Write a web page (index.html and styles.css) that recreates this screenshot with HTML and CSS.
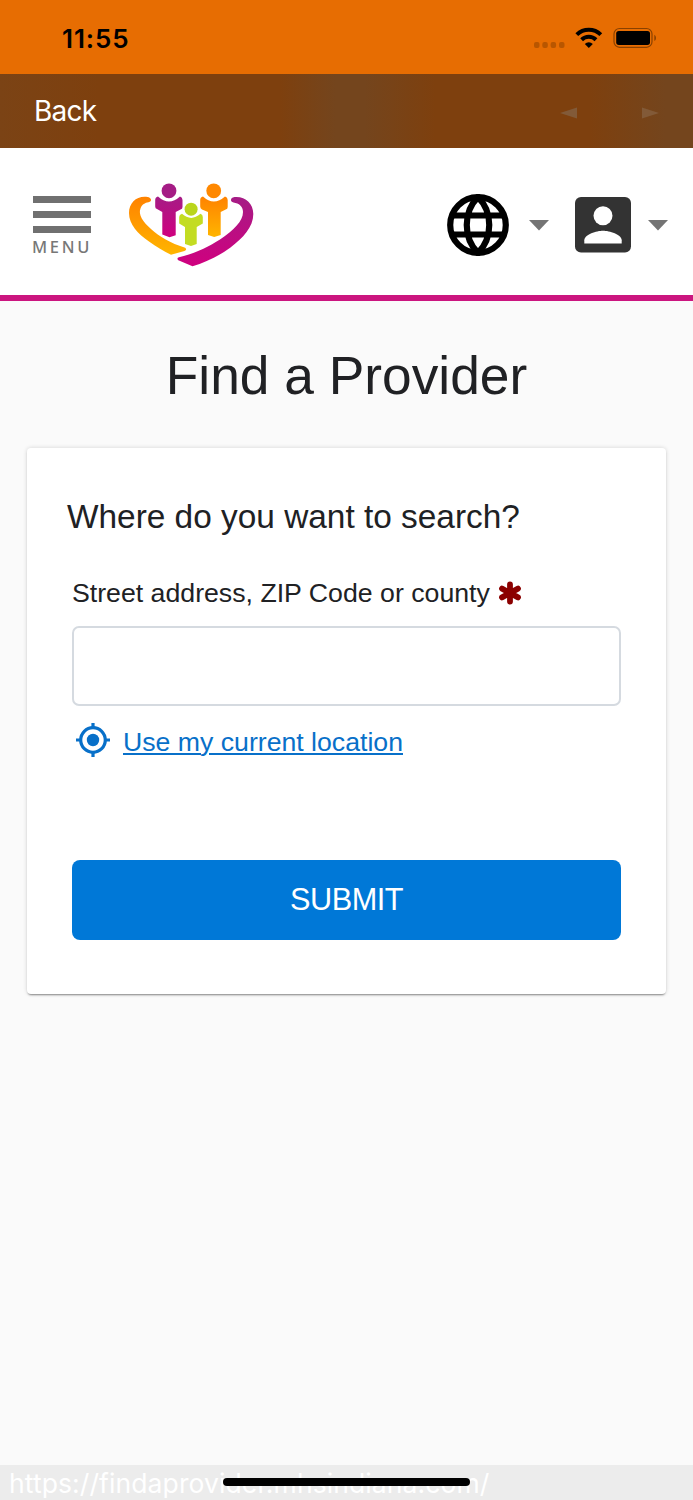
FILE: index.html
```html
<!DOCTYPE html>
<html lang="en">
<head>
<meta charset="utf-8">
<title>Find a Provider</title>
<link rel="stylesheet" href="styles.css">
</head>
<body>
<div class="screen">
  <div class="status">
    <span class="time">11:55</span>
    <svg class="status-icons" width="126" height="28" viewBox="0 0 126 28">
      <g fill="#b85600"><rect x="4" y="18" width="5.5" height="6" rx="2"/><rect x="12.3" y="18" width="5.5" height="6" rx="2"/><rect x="20.6" y="18" width="5.5" height="6" rx="2"/><rect x="29" y="18" width="5.5" height="6" rx="2"/></g>
      <g fill="none" stroke="#000" stroke-width="4"><path d="M46.800 10.600a17.300 17.300 0 0 1 24 0"/><path d="M51.600 15.700a10.300 10.300 0 0 1 14.400 0"/></g>
      <path d="M58.800 24l-4-4a5.700 5.700 0 0 1 8 0z"/>
      <rect x="84" y="4.500" width="38" height="18.800" rx="5.500" fill="none" stroke="#8a4100" stroke-width="1.200"/>
      <rect x="86.200" y="7" width="33.800" height="13.900" rx="2.600"/>
      <path d="M124.300 10.700q1.700 1 1.700 3.200t-1.700 3.200z" fill="#8a4100"/>
    </svg>
  </div>
  <nav class="browser-nav">
    <span class="back">Back</span>
    <svg class="arrows" width="99" height="14" viewBox="0 0 99 14" fill="#825a38"><path d="M0 7L17 1.500v11zM99 7L82 1.500v11z"/></svg>
  </nav>
  <header class="site-header">
    <div class="menu">
      <i class="bar"></i><i class="bar"></i><i class="bar"></i>
      <span class="menu-label">MENU</span>
    </div>
    <svg class="logo" width="126" height="86" viewBox="0 0 126 86">
      <defs>
        <linearGradient id="orange" x1="0" y1="0" x2="0" y2="1"><stop offset="0" stop-color="#ff8200"/><stop offset="1" stop-color="#ffb500"/></linearGradient>
        <linearGradient id="purple" x1="0" y1="0" x2="0" y2="1"><stop offset="0" stop-color="#a51c85"/><stop offset="1" stop-color="#d0007f"/></linearGradient>
      </defs>
      <path fill="url(#orange)" d="M18.500 14C8 12.500 0 19.500 0 30C0 41.500 9 51 20 58.500C27 63.500 35 68.500 42 71.700L55.500 68C57.800 67 57.500 65.300 55.500 64.500C42 60.500 30 53.500 22 46C14 39 9 31.500 11.500 25.500C13 21.500 16 19.800 19.500 19.300C23.500 18.500 22.500 14.500 18.500 14Z"/>
      <path fill="url(#purple)" d="M105.500 14C116 13 124.300 20 124.300 31C124.300 44 114 55 101.500 64.500C90 73 76.500 79.500 63.500 83.300L49.300 77.300C47.800 76 48.500 74.500 50 74.200C66 70.500 80 63.500 91 56.500C105 47 114 38 114 29C114 23.500 110 20.200 104.500 19.500C100.500 18.500 101.500 14.500 105.500 14Z"/>
      <circle cx="40" cy="7.800" r="7.400" fill="#a51c85"/><circle cx="84.700" cy="7.800" r="7.400" fill="#ff8800"/>
      <path fill="url(#purple)" d="M29 13.500Q40 23.500 51 13.500Q53.500 14.200 53.500 17V24Q53.500 26 51.500 26.500L46.700 29V52.300L40.500 54.300L33.300 51.500V29L28 26Q26.200 25.500 26.200 23.500V17Q26.200 14.200 29 13.500Z"/>
      <path fill="url(#orange)" d="M74 13.500Q84.700 23.500 96 13.500Q98.700 14.200 98.700 17V24Q98.700 26 96.700 26.500L91.700 29V52L85.200 54L79 52V29L73 26.500Q71.200 25.500 71.200 23.500V17Q71.200 14.200 74 13.500Z"/>
      <circle cx="62.100" cy="26.200" r="6.500" fill="#bad51c"/>
      <path fill="#c3dc22" d="M53 30.800Q62.100 39 71.500 30.800Q73.800 31.500 73.800 34V40.500L67.700 44V61L62 63L56 61V44L50.200 40.500V34Q50.200 31.500 53 30.800Z"/>
    </svg>
    <div class="tools">
      <svg width="62" height="62" viewBox="0 0 62 62" fill="none" stroke="#000" stroke-width="6.200"><circle cx="31" cy="31" r="27.800"/><path d="M31 3C16 18 16 44 31 59C46 44 46 18 31 3ZM5 21.500h52M5 40.500h52"/></svg>
      <svg class="caret" width="20" height="11" viewBox="0 0 20 11"><path d="M0 0h20L10 10.500z" fill="#747474"/></svg>
      <svg class="person" width="56" height="56" viewBox="0 0 56 56"><rect width="56" height="55.500" rx="6" fill="#333"/><circle cx="28" cy="18.800" r="9.500" fill="#fff"/><path d="M9.300 46.500v-3.200c0-6 12.500-9.600 18.700-9.600s18.700 3.600 18.700 9.600v3.200z" fill="#fff"/></svg>
      <svg class="caret" width="20" height="11" viewBox="0 0 20 11"><path d="M0 0h20L10 10.500z" fill="#747474"/></svg>
    </div>
  </header>
  <main class="content">
    <h1 class="title">Find a Provider</h1>
    <form class="card">
      <h2 class="question">Where do you want to search?</h2>
      <label class="label" for="address">Street address, ZIP Code or county
        <svg class="required" width="24" height="24" viewBox="0 0 24 24" stroke="#8b0000" stroke-width="5.800" stroke-linecap="round"><path d="M12 3.400v17.200M4 7.600l16 8.800M20 7.600L4 16.400"/></svg>
      </label>
      <input class="field" id="address" type="text">
      <div class="location">
        <svg width="34" height="34" viewBox="0 0 34 34" fill="none" stroke="#0870c9" stroke-width="3.200"><circle cx="17" cy="17" r="12.300"/><circle cx="17" cy="17" r="6.200" fill="#0870c9" stroke="none"/><path d="M17 0v5M17 29v5M0 17h5M29 17h5"/></svg>
        <a class="link" href="#">Use my current location</a>
      </div>
      <button class="submit" type="button">SUBMIT</button>
    </form>
  </main>
  <footer class="url-bar"><span class="url">https://findaprovider.mhsindiana.com/</span><i class="home"></i></footer>
</div>
</body>
</html>
```
FILE: styles.css
```css
* { box-sizing: border-box; }
body { margin: 0; font-family: "Liberation Sans", Arial, sans-serif; color: #202124; }
.screen { width: 693px; height: 1500px; display: flex; flex-direction: column; background: #fafafa; overflow: hidden; }
.status { height: 74px; flex: none; background: #e76d02; display: flex; justify-content: space-between; padding: 24px 34px 0 62px; }
.time { font: 600 26px/29px Inter, sans-serif; color: #000; letter-spacing: .9px; }
.status-icons { margin-right: 3px; }
.browser-nav { height: 73.500px; flex: none; display: flex; align-items: center; justify-content: space-between; padding: 0 35px 0 34px;
  background: linear-gradient(90deg, #7b4315 0, #7e400e 100px, #7e400e 280px, #74451d 335px, #74451d 365px, #7e400e 435px, #7e400e 590px, #74451d 665px, #74451d 693px); }
.back { font: 400 28px/36px Inter, sans-serif; color: #fff; letter-spacing: -.800px; }
.arrows { margin: 5px -1px 0 0; }
.site-header { height: 153.500px; flex: none; background: #fff; border-bottom: 6px solid #cb157f; display: flex; align-items: flex-start; padding: 0 25px 0 33px; }
.menu { width: 58px; padding-top: 48px; display: flex; flex-direction: column; gap: 8px; }
.bar { height: 7px; background: #707070; }
.menu-label { font: 500 16.500px/18px "Noto Sans", sans-serif; color: #777; letter-spacing: 2.700px; margin: -3px 0 0 -1px; }
.logo { margin: 35px 0 0 38px; }
.tools { margin: 46px 0 0 auto; display: flex; align-items: center; }
.caret { margin-left: 20px; margin-top: 2px; }
.person { margin-left: 26px; }
.caret:last-child { margin-left: 17px; }
.content { padding: 45px 27px 0; }
.title { margin: 0 0 42px; font-size: 53.300px; line-height: 60px; font-weight: 400; text-align: center; }
.card { height: 546px; padding: 49px 45px 0; background: #fff; border-radius: 4px; box-shadow: 0 2px 2px -1px rgba(0,0,0,.42), 0 0 4px rgba(0,0,0,.16); display: flex; flex-direction: column; }
.question { margin: 0 0 36px -5px; font-size: 33.400px; line-height: 40px; font-weight: 400; }
.label { font-size: 26.700px; line-height: 40px; display: flex; align-items: center; gap: 8px; margin-bottom: 13px; }
.required { margin-top: -1px; }
.field { width: 549px; height: 80px; border: 2px solid #d5dae0; border-radius: 7px; background: #fff; padding: 0 16px; font: inherit; outline: 0; }
.location { display: flex; align-items: flex-start; gap: 13px; padding: 17px 0 0 4px; height: 154px; }
.link { font-size: 26.670px; line-height: 39px; color: #0870c9; text-decoration-thickness: 2px; text-underline-offset: 2px; }
.submit { width: 549px; height: 80px; border: 0; border-radius: 8px; background: #0078d7; color: #fff; font: 400 30.700px/40px "Liberation Sans", Arial, sans-serif; letter-spacing: -.500px; padding: 0; }
.url-bar { margin-top: auto; height: 35px; flex: none; background: #ececec; position: relative; padding-left: 9px; }
.url { font: 400 26.500px/36px Inter, sans-serif; color: #fff; letter-spacing: .100px; }
.home { position: absolute; left: 223px; top: 13px; width: 247px; height: 8px; border-radius: 4px; background: #000; }
```
